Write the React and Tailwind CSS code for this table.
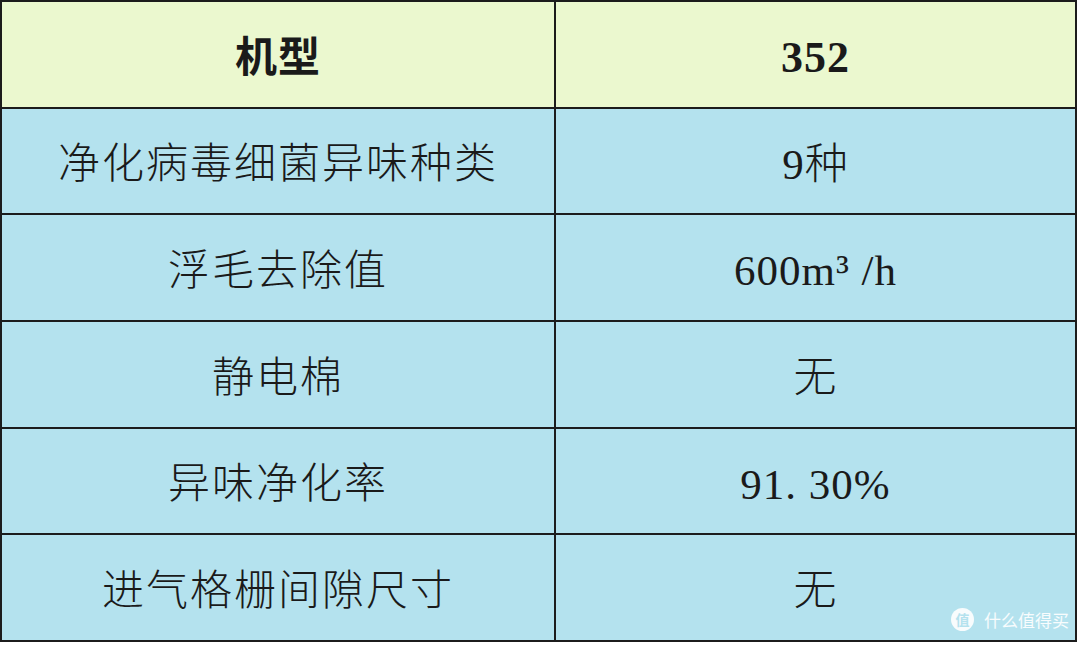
const rows = [
    ['净化病毒细菌异味种类', '9种'],
    ['浮毛去除值', '600m³ /h'],
    ['静电棉', '无'],
    ['异味净化率', '91. 30%'],
    ['进气格栅间隙尺寸', '无'],
];

const cellFont = { fontFamily: '"Liberation Serif", "Noto Sans CJK SC", serif' };

const App = () => {
    return (
        <div className="w-[1080px] h-[645px] bg-white relative overflow-hidden">
            <div
                className="w-[1077px] h-[642px] border-2 border-[#1c1c1c] bg-[#1c1c1c] grid grid-cols-[552px_1fr] grid-rows-6 gap-[2px] text-[#1a1a1a]"
                style={cellFont}
            >
                <div className="bg-[#ebf8cf] flex items-center justify-center pt-[8px] text-[42px] font-bold tracking-[1px]">
                    机型
                </div>
                <div className="bg-[#ebf8cf] flex items-center justify-center pt-[8px] text-[44px] font-bold tracking-[1px]">
                    352
                </div>
                {rows.map(([label, value]) => (
                    <div key={label} className="contents">
                        <div className="bg-[#b4e2ee] flex items-center justify-center pt-[8px] text-[42px] font-light tracking-[2px]">
                            {label}
                        </div>
                        <div className="bg-[#b4e2ee] flex items-center justify-center pt-[8px] text-[43px] font-light tracking-[1px]">
                            {value}
                        </div>
                    </div>
                ))}
            </div>

            {/* watermark */}
            <div className="absolute right-[11px] bottom-[14px] flex items-center gap-[10px] text-white/90" style={{ fontFamily: '"Noto Sans CJK SC", sans-serif' }}>
                <div className="w-[23px] h-[23px] rounded-full bg-white/90 flex items-center justify-center text-[14px] font-bold text-[#b4e2ee]">
                    值
                </div>
                <span className="text-[17px] leading-none">什么值得买</span>
            </div>
        </div>
    );
};

export default App;
